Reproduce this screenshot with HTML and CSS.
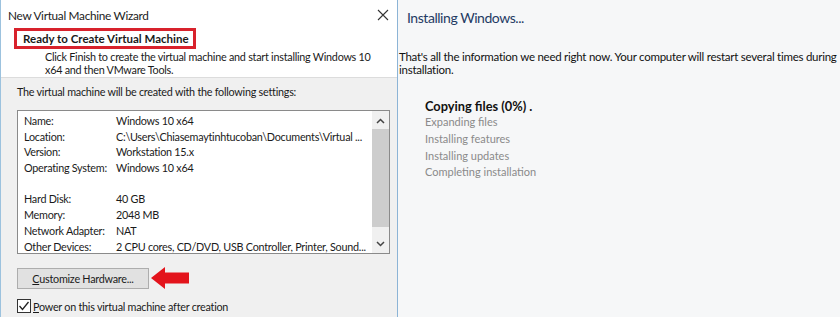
FILE: index.html
```html
<!DOCTYPE html>
<html lang="en">
<head>
  <meta charset="UTF-8">
  <meta name="viewport" content="width=device-width, initial-scale=1.0">
  <title>New Virtual Machine Wizard</title>
  <link rel="stylesheet" href="styles.css">
</head>
<body>
  <div class="wizard">
    <div class="wizard-head">
      <div class="title-bar">
        <span class="title">New Virtual Machine Wizard</span>
        <svg class="close" width="12" height="12" viewBox="0 0 12 12">
          <path d="M1 1 L11 11 M11 1 L1 11" stroke="#333" stroke-width="1.1" fill="none"/>
        </svg>
      </div>
      <div class="step-title">Ready to Create Virtual Machine</div>
      <p class="step-desc">Click Finish to create the virtual machine and start installing Windows 10<br>x64 and then VMware Tools.</p>
    </div>

    <div class="wizard-body">
      <p class="intro">The virtual machine will be created with the following settings:</p>

      <div class="settings">
        <div class="settings-list">
          <div class="row"><span class="key">Name:</span><span>Windows 10 x64</span></div>
          <div class="row"><span class="key">Location:</span><span>C:\Users\Chiasemaytinhtucoban\Documents\Virtual ...</span></div>
          <div class="row"><span class="key">Version:</span><span>Workstation 15.x</span></div>
          <div class="row"><span class="key">Operating System:</span><span>Windows 10 x64</span></div>
          <div class="row gap"></div>
          <div class="row"><span class="key">Hard Disk:</span><span>40 GB</span></div>
          <div class="row"><span class="key">Memory:</span><span>2048 MB</span></div>
          <div class="row"><span class="key">Network Adapter:</span><span>NAT</span></div>
          <div class="row"><span class="key">Other Devices:</span><span>2 CPU cores, CD/DVD, USB Controller, Printer, Sound...</span></div>
        </div>
        <div class="scrollbar">
          <svg width="9" height="6" viewBox="0 0 9 6"><path d="M1 5 L4.5 1.5 L8 5" stroke="#444" stroke-width="1.5" fill="none"/></svg>
          <div class="thumb"></div>
          <svg width="9" height="6" viewBox="0 0 9 6"><path d="M1 1 L4.5 4.5 L8 1" stroke="#444" stroke-width="1.5" fill="none"/></svg>
        </div>
      </div>

      <div class="actions">
        <button class="btn"><u>C</u>ustomize Hardware...</button>
        <svg class="arrow" width="40" height="24" viewBox="0 0 40 24">
          <polygon points="1,12 15,1 15,6.5 39,6.5 39,17.5 15,17.5 15,23" fill="#e3141c"/>
        </svg>
      </div>

      <label class="check">
        <span class="box">
          <svg width="12" height="12" viewBox="0 0 12 12"><path d="M1.5 6 L4.5 9.5 L10.5 2" stroke="#222" stroke-width="1.3" fill="none"/></svg>
        </span>
        <span><u>P</u>ower on this virtual machine after creation</span>
      </label>
    </div>
  </div>

  <div class="installer">
    <h1>Installing Windows...</h1>
    <p class="info">That's all the information we need right now. Your computer will restart several times during installation.</p>
    <ul class="steps">
      <li class="current">Copying files (0%) .</li>
      <li>Expanding files</li>
      <li>Installing features</li>
      <li>Installing updates</li>
      <li>Completing installation</li>
    </ul>
  </div>
</body>
</html>
```

FILE: styles.css
```css
body {
  margin: 0;
  padding: 0;
  display: flex;
  height: 317px;
  overflow: hidden;
  font-family: 'Lato', 'Noto Sans', sans-serif;
  color: #1a1a1a;
  background-color: #f6f7f8;
}

.wizard {
  width: 398px;
  flex-shrink: 0;
  border-left: 1px solid #9cc2de;
  border-right: 1px solid #8cb4d6;
  background-color: #f0f0f0;
  font-size: 10.8px;
  letter-spacing: -0.25px;
  box-sizing: border-box;
}

.wizard-head {
  background-color: #ffffff;
  height: 78px;
  border-bottom: 1px solid #dcdcdc;
  box-sizing: border-box;
}

.title-bar {
  display: flex;
  justify-content: space-between;
  align-items: center;
  padding: 8px 8px 0 7px;
  height: 14px;
}

.title {
  font-size: 11.8px;
  letter-spacing: -0.3px;
  color: #222;
}

.step-title {
  display: inline-block;
  margin: 6px 0 0 13px;
  padding: 1px 4px 0 6px;
  border: 3px solid #d8222c;
  font-weight: bold;
  font-size: 11.5px;
  letter-spacing: 0;
  line-height: 14px;
}

.step-desc {
  margin: 1px 0 0 44px;
  line-height: 13px;
}

.wizard-body {
  padding: 7px 7px 0 16px;
}

.intro {
  margin: 0 0 12px 0;
}

.settings {
  display: flex;
  height: 144px;
  border: 1px solid #8a8a8a;
  background-color: #ffffff;
  box-sizing: border-box;
}

.settings-list {
  flex: 1;
  min-width: 0;
  overflow: hidden;
  padding: 2px 0 0 6px;
}

.row {
  display: flex;
  height: 15.7px;
  line-height: 15.7px;
  white-space: nowrap;
}

.key {
  width: 92px;
  flex-shrink: 0;
}

.scrollbar {
  width: 17px;
  flex-shrink: 0;
  background-color: #f0f0f0;
  display: flex;
  flex-direction: column;
  align-items: center;
  padding: 7px 0 6px 0;
  box-sizing: border-box;
}

.thumb {
  flex: 1;
  align-self: stretch;
  margin: 5px 0 14px 0;
  background-color: #cdcdcd;
}

.actions {
  display: flex;
  align-items: center;
  gap: 1px;
  margin-top: 12px;
}

.btn {
  width: 132px;
  height: 21px;
  padding: 0;
  background-color: #e1e1e1;
  border: 1px solid #adadad;
  font-family: inherit;
  font-size: 10.8px;
  letter-spacing: -0.25px;
  color: #1a1a1a;
}

.check {
  display: flex;
  align-items: center;
  gap: 2px;
  margin-top: 9px;
}

.box {
  width: 12px;
  height: 12px;
  border: 1px solid #333;
  background-color: #fff;
  display: flex;
}

.installer {
  flex: 1;
  padding: 0 0 0 1px;
  font-size: 11.5px;
  letter-spacing: -0.25px;
}

.installer h1 {
  margin: 9px 0 0 8px;
  font-size: 14px;
  letter-spacing: -0.45px;
  font-weight: normal;
  color: #1f3b64;
}

.info {
  margin: 24px 0 0 0;
  line-height: 13px;
  color: #111;
}

.steps {
  list-style: none;
  margin: 23px 0 0 26px;
  padding: 0;
  letter-spacing: 0;
}

.steps li {
  font-size: 11px;
  line-height: 16.8px;
  color: #8a8a8a;
}

.steps .current {
  font-size: 12.8px;
  font-weight: bold;
  line-height: 15px;
  color: #111;
}
```
